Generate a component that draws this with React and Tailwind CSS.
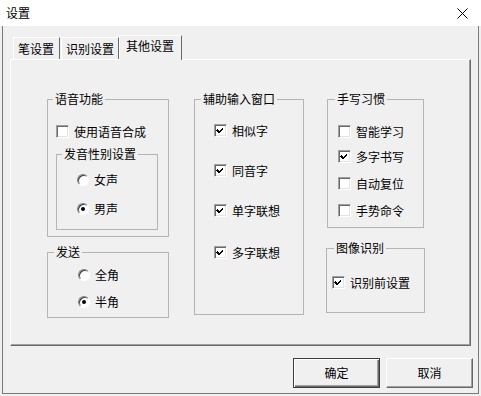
import React from "react";

const font = "font-['Microsoft_YaHei','Noto_Sans_CJK_SC',sans-serif]";

const Check = ({ checked }) => (
  <span className="flex h-[13px] w-[13px] shrink-0 items-center justify-center border border-t-[#a0a0a0] border-l-[#a0a0a0] border-b-white border-r-white bg-white shadow-[inset_1px_1px_0_#696969,inset_-1px_-1px_0_#e3e3e3]">
    {checked && (
      <svg width="11" height="11" viewBox="0 0 11 11" shapeRendering="crispEdges">
        <path d="M2 4h1v1h1v1h1v-1h1v-1h1v-1h1v1h-1v1h-1v1h-1v1h-1v1h-1v-1h-1v-1h-1z M2 5h1v1h1v1h1v-1h1v-1h1v-1h1v1h-1v1h-1v1h-1v1h-1v-1h-1z" fill="#000" />
      </svg>
    )}
  </span>
);

const Radio = ({ checked }) => (
  <span className="flex h-[12px] w-[12px] shrink-0 items-center justify-center rounded-full border border-t-[#808080] border-l-[#808080] border-b-white border-r-white bg-white shadow-[inset_1px_1px_0_#404040]">
    {checked && <span className="h-[4px] w-[4px] rounded-full bg-black" />}
  </span>
);

const CheckRow = ({ checked, label, className }) => (
  <div className={`flex h-[13px] items-center gap-[5px] ${className}`}>
    <Check checked={checked} />
    <span className="leading-[14px]">{label}</span>
  </div>
);

const RadioRow = ({ checked, label, className }) => (
  <div className={`flex h-[13px] items-center gap-[5px] ${className}`}>
    <Radio checked={checked} />
    <span className="leading-[14px]">{label}</span>
  </div>
);

const Group = ({ title, legendClass, className, children }) => (
  <fieldset className={`border border-[#b4b4b4] ${className}`}>
    <legend className={`px-[2px] leading-[14px] ${legendClass}`}>{title}</legend>
    {children}
  </fieldset>
);

const Tab = ({ label, active, className }) =>
  active ? (
    <div className={`relative z-10 -mb-px flex h-[25px] items-start border-l border-t border-r border-l-white border-t-white border-r-[#696969] bg-[#f0f0f0] pl-[6px] pt-[3px] ${className}`}>
      <span className="leading-[14px]">{label}</span>
    </div>
  ) : (
    <div className={`flex h-[22px] items-start border-l border-t border-r border-l-white border-t-white border-r-[#696969] pl-[4px] pt-[4px] ${className}`}>
      <span className="leading-[14px]">{label}</span>
    </div>
  );

export default function App() {
  return (
    <div className={`flex h-[396px] w-[481px] flex-col bg-[#f0f0f0] text-[12px] text-black ${font}`}>
      <div className="flex h-[26px] shrink-0 items-center justify-between bg-white pl-[6px] pr-[13px]">
        <span className="leading-[14px]">设置</span>
        <svg width="11" height="11" viewBox="0 0 11 11">
          <path d="M0.5 0.5L10.5 10.5M10.5 0.5L0.5 10.5" stroke="#000" strokeWidth="1" />
        </svg>
      </div>

      <div className="flex flex-1 px-[2px] pb-[2px]">
        <div className="flex flex-1 flex-col border-l border-r border-b border-[#7a7a7a]">
          <div className="ml-[10px] mt-[9px] flex h-[24px] items-end">
            <Tab label="笔设置" className="w-[47px]" />
            <Tab label="识别设置" className="ml-px w-[58px]" />
            <Tab label="其他设置" active className="w-[63px]" />
          </div>

          <div className="ml-[7px] flex h-[287px] w-[461px] border border-l-white border-t-white border-r-[#696969] border-b-[#696969] shadow-[inset_-1px_-1px_0_#a0a0a0]">
            <div className="ml-[36px] mt-[32px] flex flex-col">
              <Group title="语音功能" legendClass="ml-[5px]" className="h-[145px] w-[122px]">
                <CheckRow label="使用语音合成" className="ml-[8px] mt-[19px]" />
                <Group title="发音性别设置" legendClass="ml-[5px]" className="ml-[8px] mt-[9px] h-[83px] w-[102px]">
                  <RadioRow label="女声" className="ml-[20px] mt-[12px]" />
                  <RadioRow checked label="男声" className="ml-[20px] mt-[16px]" />
                </Group>
              </Group>
              <Group title="发送" legendClass="ml-[6px]" className="mt-[8px] h-[73px] w-[122px]">
                <RadioRow label="全角" className="ml-[30px] mt-[9px]" />
                <RadioRow checked label="半角" className="ml-[30px] mt-[14px]" />
              </Group>
            </div>

            <div className="ml-[25px] mt-[32px]">
              <Group title="辅助输入窗口" legendClass="ml-[6px]" className="h-[223px] w-[110px]">
                <CheckRow checked label="相似字" className="ml-[19px] mt-[18px]" />
                <CheckRow checked label="同音字" className="ml-[19px] mt-[27px]" />
                <CheckRow checked label="单字联想" className="ml-[19px] mt-[27px]" />
                <CheckRow checked label="多字联想" className="ml-[19px] mt-[29px]" />
              </Group>
            </div>

            <div className="ml-[23px] mt-[32px] flex flex-col items-start">
              <Group title="手写习惯" legendClass="ml-[7px]" className="h-[136px] w-[97px]">
                <CheckRow label="智能学习" className="ml-[10px] mt-[19px]" />
                <CheckRow checked label="多字书写" className="ml-[10px] mt-[12px]" />
                <CheckRow label="自动复位" className="ml-[10px] mt-[14px]" />
                <CheckRow label="手势命令" className="ml-[10px] mt-[14px]" />
              </Group>
              <Group title="图像识别" legendClass="ml-[7px]" className="-ml-px mt-[13px] h-[72px] w-[99px]">
                <CheckRow checked label="识别前设置" className="ml-[5px] mt-[21px]" />
              </Group>
            </div>
          </div>

          <div className="mt-[12px] flex justify-end gap-[6px] pr-[5px]">
            <button className="flex h-[30px] w-[87px] items-center justify-center border border-[#3c3c3c] bg-[#f0f0f0] shadow-[inset_1px_1px_0_#fff,inset_-1px_-1px_0_#696969,inset_-2px_-2px_0_#a0a0a0]">
              <span className="leading-[14px]">确定</span>
            </button>
            <button className="flex h-[30px] w-[87px] items-center justify-center border border-t-white border-l-white border-r-[#696969] border-b-[#696969] bg-[#f0f0f0] shadow-[inset_-1px_-1px_0_#a0a0a0]">
              <span className="leading-[14px]">取消</span>
            </button>
          </div>
        </div>
      </div>
    </div>
  );
}
